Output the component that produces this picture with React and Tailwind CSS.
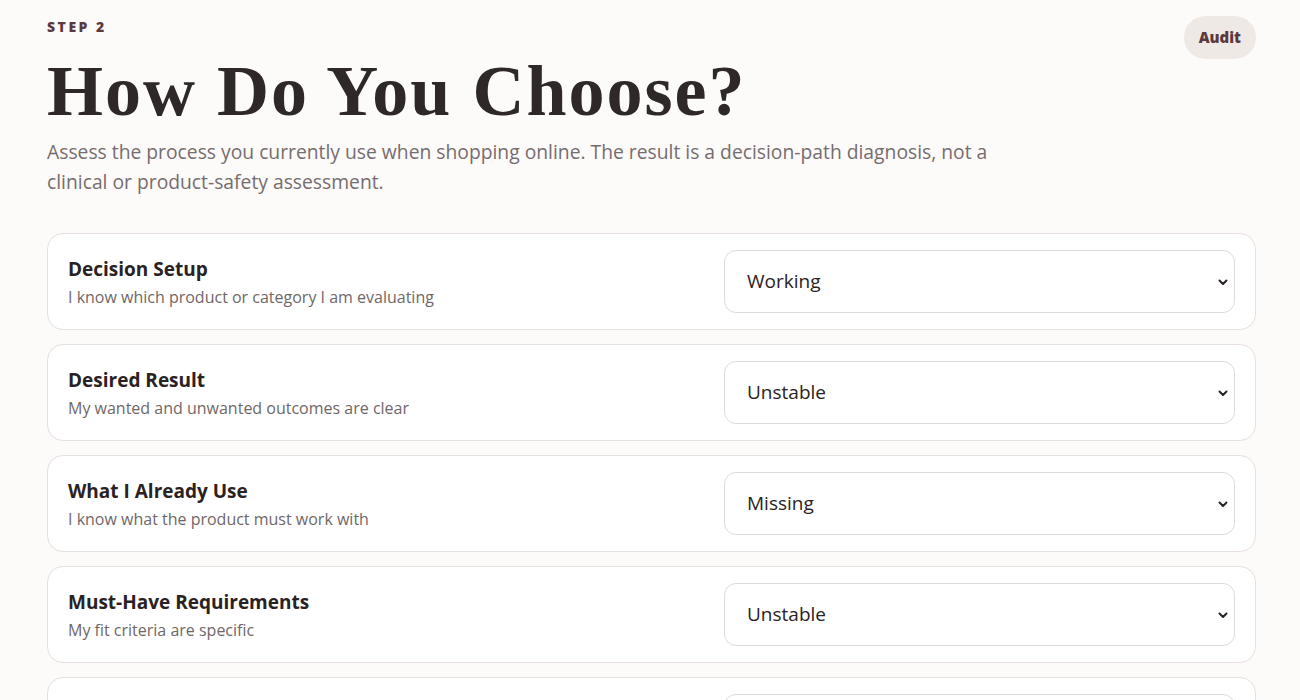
import React from "react";

const rows = [
  { title: "Decision Setup", desc: "I know which product or category I am evaluating", value: "Working" },
  { title: "Desired Result", desc: "My wanted and unwanted outcomes are clear", value: "Unstable" },
  { title: "What I Already Use", desc: "I know what the product must work with", value: "Missing" },
  { title: "Must-Have Requirements", desc: "My fit criteria are specific", value: "Unstable" },
  { title: "Tradeoffs", desc: "I know what I would give up", value: "Working" },
];

function Row({ r }) {
  return (
    <div className="flex items-center justify-between rounded-[16px] border border-[#e6e0de] bg-white px-[20px] py-[16px]">
      <div className="flex flex-col">
        <div className="text-[19px] font-bold leading-[24px] text-[#2a2222]">{r.title}</div>
        <div className="mt-[6px] text-[16px] leading-[20px] text-[#6f6767]">{r.desc}</div>
      </div>
      <div className="relative w-[511px]">
        <select
          defaultValue={r.value}
          className="h-[63px] w-full appearance-none rounded-[12px] border border-[#e0dbd9] bg-white pl-[22px] pr-[40px] text-[19px] text-[#2a2222] outline-none"
          style={{ fontFamily: "'Open Sans', sans-serif" }}
        >
          <option>Working</option>
          <option>Unstable</option>
          <option>Missing</option>
        </select>
        <svg className="pointer-events-none absolute right-[6px] top-1/2 -translate-y-1/2" width="12" height="12" viewBox="0 0 12 12">
          <path d="M2.5 4.5 L6 8 L9.5 4.5" fill="none" stroke="#2a2222" strokeWidth="2" strokeLinecap="round" strokeLinejoin="round" />
        </svg>
      </div>
    </div>
  );
}

export default function App() {
  return (
    <div className="min-h-[700px] bg-[#fdfafa] pl-[47px] pr-[44px] pt-[16px]" style={{ fontFamily: "'Open Sans', sans-serif" }}>
      <div className="flex items-start justify-between">
        <div className="pt-0 text-[14px] font-extrabold tracking-[0.18em] text-[#5b3a3f]">STEP 2</div>
        <button className="h-[43px] rounded-full bg-[#efe9e5] px-[15px] text-[15px] font-extrabold text-[#5b3a3f]">Audit</button>
      </div>
      <h1
        className="-mt-[8px] text-[72px] font-bold leading-[80px] tracking-[2px] text-[#2e2828]"
        style={{ fontFamily: "Georgia, 'Liberation Serif', serif" }}
      >
        How Do You Choose?
      </h1>
      <p className="mt-[6px] max-w-[960px] text-[19.3px] leading-[30px] text-[#756d6d]">
        Assess the process you currently use when shopping online. The result is a decision-path diagnosis, not a clinical or product-safety assessment.
      </p>
      <div className="mt-[36px] flex flex-col gap-[14px]">
        {rows.map((r) => (
          <Row key={r.title} r={r} />
        ))}
      </div>
    </div>
  );
}
